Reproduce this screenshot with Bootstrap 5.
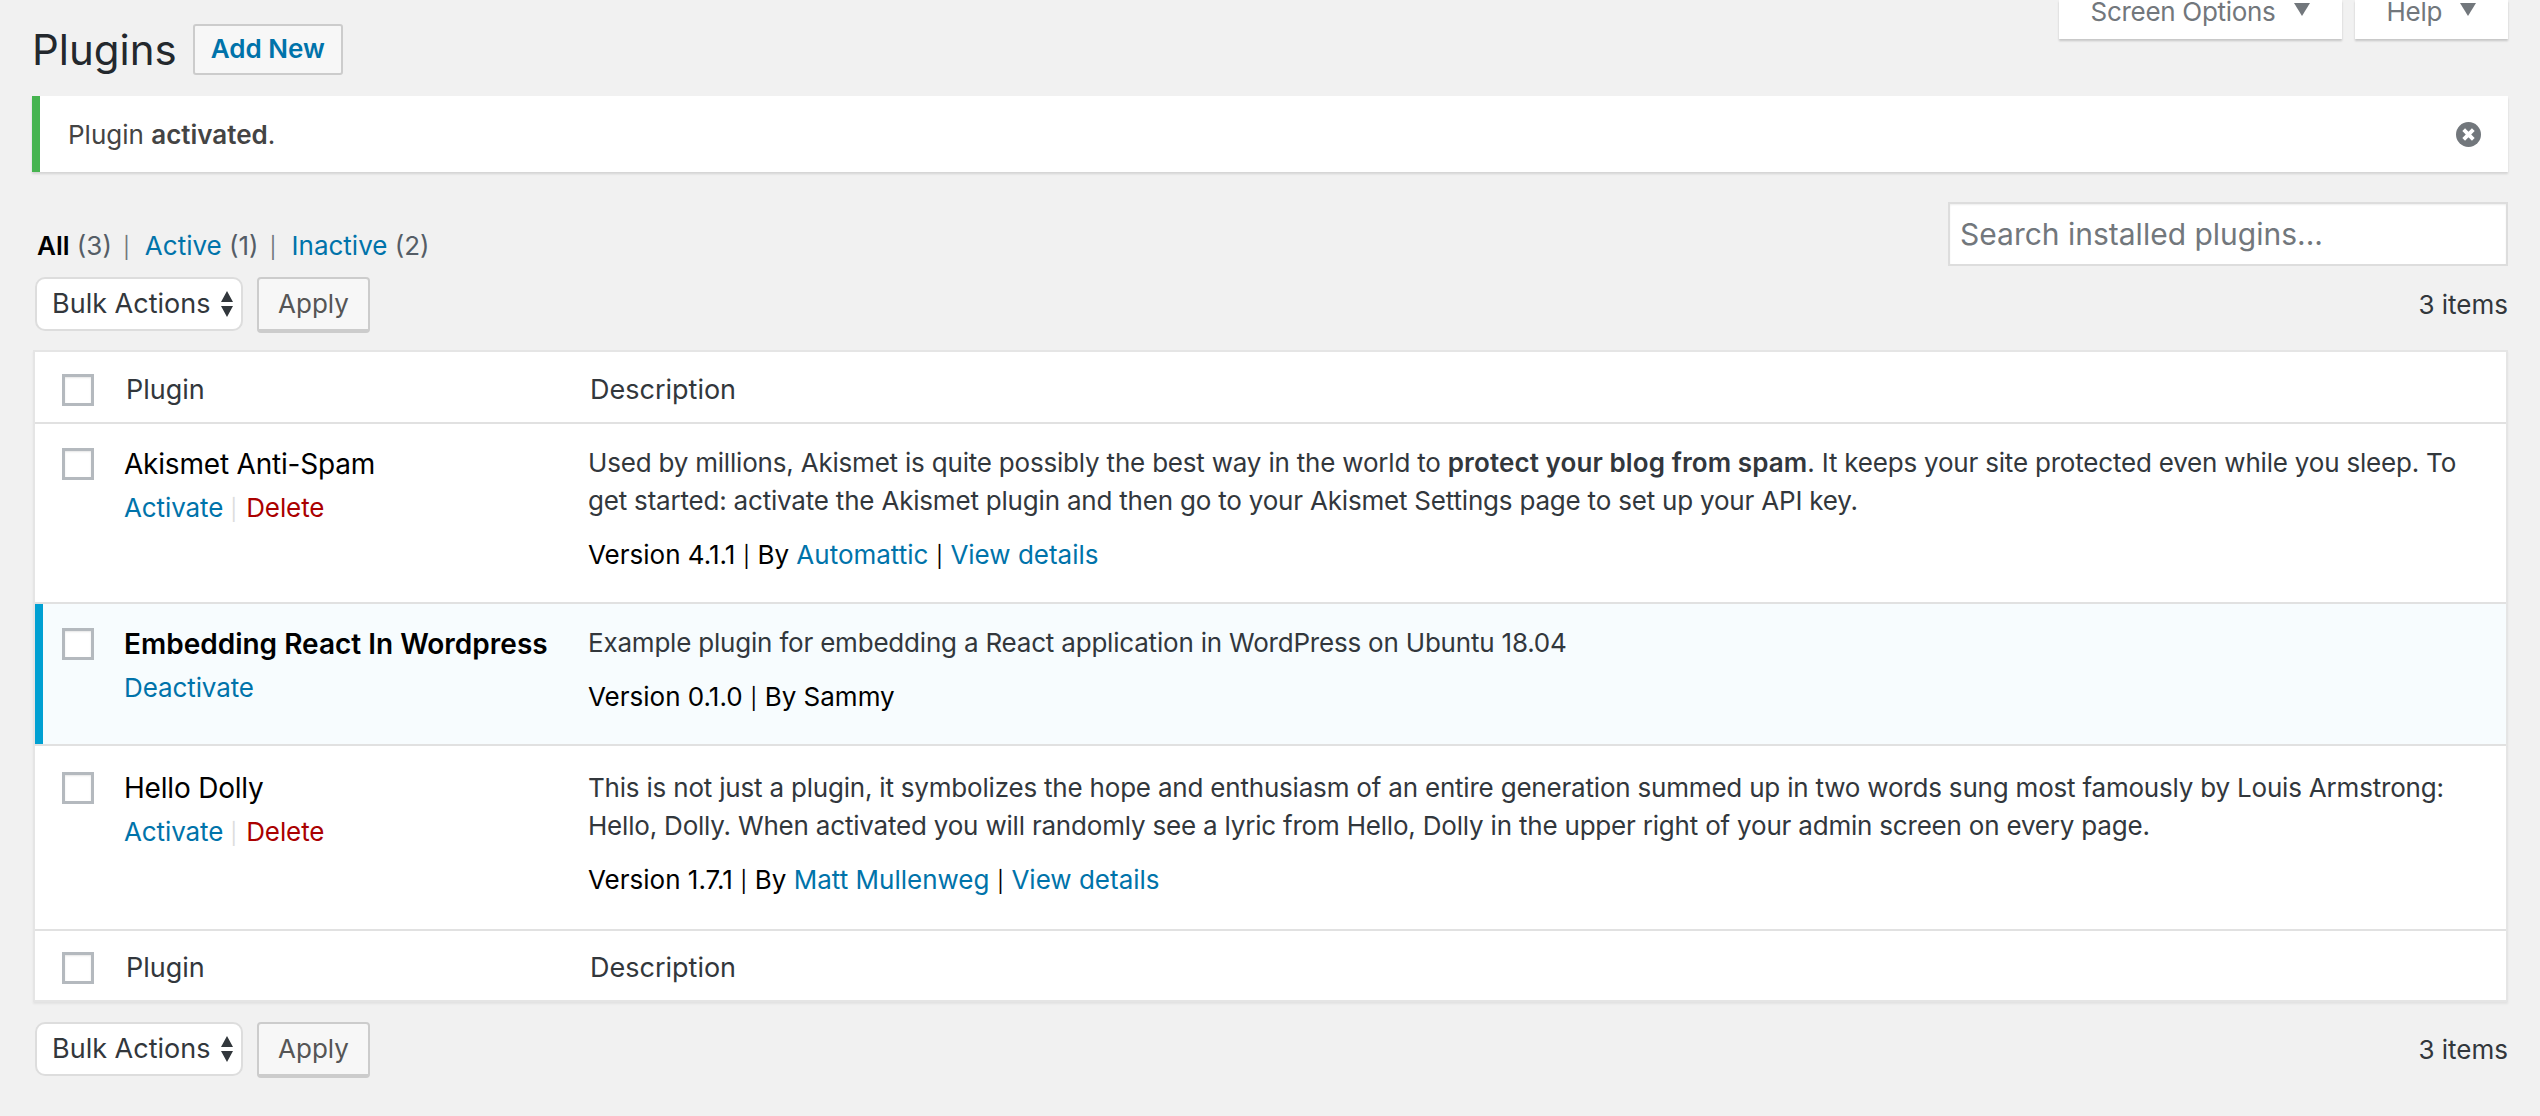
<!DOCTYPE html>
<html lang="en">
<head>
  <meta charset="UTF-8">
  <meta name="viewport" content="width=device-width, initial-scale=1">
  <title>Plugins</title>
  <link href="https://cdn.jsdelivr.net/npm/bootstrap@5.3.3/dist/css/bootstrap.min.css" rel="stylesheet">
  <style>
    body {
      background: #f1f1f1;
      color: #444;
      font-family: Inter, Roboto, "Liberation Sans", sans-serif;
      font-size: 26px;
      line-height: 38px;
      height: 1116px;
      overflow: hidden;
    }
    a { text-decoration: none; color: #0073aa; }

    .wp-wrap { padding: 0 32px; position: relative; }
    .meta-tabs { position: absolute; top: 0; right: 32px; gap: 13px; }
    .meta-tab {
      height: 39px;
      background: #fff;
      box-shadow: 0 2px 2px rgba(0,0,0,.18);
      color: #72777c;
      padding: 0 32px;
      line-height: 24px;
      letter-spacing: -.3px;
      gap: 18px;
    }
    .meta-tab svg { width: 16px; height: 13px; margin-top: 3px; }

    .head-row { height: 96px; padding-top: 24px; align-items: flex-start; }
    .page-title { font-size: 42px; line-height: 52px; color: #23282d; font-weight: 400; margin: 0 16px 0 0; }
    .add-btn {
      width: 150px; height: 51px;
      border: 2px solid #ccc;
      border-radius: 3px;
      background: #f7f7f7;
      color: #0073aa;
      font-weight: 600;
      font-size: 26px;
      line-height: 46px;
      text-align: center;
    }

    .notice-ok {
      height: 76px;
      background: #fff;
      border-left: 8px solid #46b450;
      box-shadow: 0 2px 2px rgba(0,0,0,.12);
      padding: 2px 27px 0 28px;
    }
    .notice-ok strong { font-weight: 600; }
    .dismiss-ic { width: 25px; height: 25px; margin-top: -2px; }

    .filters-row { height: 105px; }
    .view-links { padding: 55px 0 0 5px; color: #555d66; line-height: 38px; }
    .view-links b { color: #000; font-weight: 600; }
    .view-links i { font-style: normal; font-size: 21px; color: #72777c; margin: 0 15px 0 11px; }
    .search-box {
      width: 560px; height: 64px; margin-top: 30px;
      border: 2px solid #ddd;
      box-shadow: inset 0 1px 2px rgba(0,0,0,.07);
      background: #fff;
      font-size: 30px;
      padding: 0 10px;
      border-radius: 0;
      color: #32373c;
    }
    .search-box::placeholder { color: #72777c; opacity: 1; }

    .tablenav-row { height: 73px; align-items: flex-start; }
    .foot-nav { margin-top: 20px; }
    .bulk-sel {
      width: 208px; height: 54px;
      margin-left: 3px;
      background: #fff;
      border: 2px solid #ddd;
      border-radius: 10px;
      color: #32373c;
      font-size: 27px;
      line-height: 50px;
      padding-left: 15px;
      gap: 11px;
    }
    .bulk-sel svg { width: 12px; height: 26px; }
    .apply-btn {
      width: 113px; height: 56px;
      margin-left: 14px;
      background: #f7f7f7;
      border: 2px solid #ccc;
      border-bottom-width: 4px;
      border-radius: 4px;
      color: #555;
      line-height: 50px;
      text-align: center;
    }
    .count-txt { color: #32373c; line-height: 56px; margin-left: auto; }

    .plugin-tbl {
      background: #fff;
      border: 2px solid #e5e5e5;
      box-shadow: 0 2px 2px rgba(0,0,0,.06);
      margin-left: 1px;
    }
    .tbl-head { height: 72px; padding-top: 5px; border-bottom: 2px solid #e1e1e1; color: #32373c; font-size: 27px; align-items: center; }
    .tbl-head.tbl-foot { height: 71px; border-bottom: 0; border-top: 2px solid #e1e1e1; }
    .cell-check { width: 89px; flex: none; padding-left: 27px; }
    .tick-box { display: block; width: 32px; height: 32px; border: 3px solid #b4b9be; background: #fff; box-shadow: inset 0 1px 2px rgba(0,0,0,.1); }
    .cell-name { width: 464px; flex: none; }
    .tbl-head .cell-name { padding-left: 2px; }
    .tbl-head .cell-desc { padding-left: 2px; }
    .cell-desc { flex: 1; }

    .plug-row { border-bottom: 2px solid #e1e1e1; }
    .plug-row.last-row { border-bottom: 0; }
    .plug-row .cell-check { padding-top: 24px; }
    .plug-row .cell-name, .plug-row .cell-desc { padding-top: 20px; }
    .plug-row.last-row .cell-check { padding-top: 26px; }
    .plug-row.last-row .cell-name { padding-top: 22px; }
    .plug-row.last-row .cell-desc { padding-top: 23px; }
    .plug-name { color: #000; font-size: 28px; line-height: 40px; letter-spacing: -.2px; }
    .plug-acts { color: #ddd; margin-top: 5px; letter-spacing: -.1px; }
    .plug-acts .sep { font-size: 21px; margin: 0 9px 0 7px; }
    .act-del { color: #a00; }
    .plug-desc { margin: 0; color: #32373c; letter-spacing: -.2px; }
    .plug-desc strong { font-weight: 600; letter-spacing: .1px; }
    .plug-ver { color: #000; margin-top: 16px; }
    .plug-ver i { font-style: normal; font-size: 21px; margin: 0 7.5px; }

    .h-178 { height: 180px; }
    .h-140 { height: 142px; }
    .h-183 { height: 183px; }
    .row-active { background: #f7fcfe; box-shadow: inset 8px 0 0 #00a0d2; }
    .row-active .plug-name { font-weight: 600; letter-spacing: 0; }
  </style>
</head>
<body>
  <div class="wp-wrap">
    <div class="meta-tabs d-flex">
      <div class="meta-tab d-flex align-items-start">Screen Options <svg viewBox="0 0 16 13"><path d="M0 0h16L8 13z" fill="#72777c"/></svg></div>
      <div class="meta-tab d-flex align-items-start">Help <svg viewBox="0 0 16 13"><path d="M0 0h16L8 13z" fill="#72777c"/></svg></div>
    </div>

    <div class="head-row d-flex">
      <h1 class="page-title">Plugins</h1>
      <a class="add-btn" href="#">Add New</a>
    </div>

    <div class="notice-ok d-flex align-items-center justify-content-between">
      <span>Plugin <strong>activated</strong>.</span>
      <svg class="dismiss-ic" viewBox="0 0 26 26"><circle cx="13" cy="13" r="13" fill="#72777c"/><path d="M8 8l10 10M18 8L8 18" stroke="#fff" stroke-width="4"/></svg>
    </div>

    <div class="filters-row d-flex justify-content-between">
      <div class="view-links"><b>All</b> (3)<i>|</i><a href="#">Active</a> (1)<i>|</i><a href="#">Inactive</a> (2)</div>
      <input class="search-box" type="text" placeholder="Search installed plugins...">
    </div>

    <div class="tablenav-row d-flex">
      <div class="bulk-sel d-flex align-items-center">Bulk Actions <svg viewBox="0 0 12 26"><path d="M6 0l6 11H0zM6 26l6-11H0z" fill="#32373c"/></svg></div>
      <div class="apply-btn">Apply</div>
      <div class="count-txt">3 items</div>
    </div>

    <div class="plugin-tbl">
      <div class="tbl-head d-flex">
        <div class="cell-check"><span class="tick-box"></span></div>
        <div class="cell-name">Plugin</div>
        <div class="cell-desc">Description</div>
      </div>

      <div class="plug-row h-178 d-flex">
        <div class="cell-check"><span class="tick-box"></span></div>
        <div class="cell-name">
          <div class="plug-name">Akismet Anti-Spam</div>
          <div class="plug-acts"><a href="#">Activate</a><span class="sep">|</span><a class="act-del" href="#">Delete</a></div>
        </div>
        <div class="cell-desc">
          <p class="plug-desc">Used by millions, Akismet is quite possibly the best way in the world to <strong>protect your blog from spam</strong>. It keeps your site protected even while you sleep. To<br>get started: activate the Akismet plugin and then go to your Akismet Settings page to set up your API key.</p>
          <div class="plug-ver">Version 4.1.1<i>|</i>By <a href="#">Automattic</a><i>|</i><a href="#">View details</a></div>
        </div>
      </div>

      <div class="plug-row h-140 row-active d-flex">
        <div class="cell-check"><span class="tick-box"></span></div>
        <div class="cell-name">
          <div class="plug-name">Embedding React In Wordpress</div>
          <div class="plug-acts"><a href="#">Deactivate</a></div>
        </div>
        <div class="cell-desc">
          <p class="plug-desc">Example plugin for embedding a React application in WordPress on Ubuntu 18.04</p>
          <div class="plug-ver">Version 0.1.0<i>|</i>By Sammy</div>
        </div>
      </div>

      <div class="plug-row last-row h-183 d-flex">
        <div class="cell-check"><span class="tick-box"></span></div>
        <div class="cell-name">
          <div class="plug-name">Hello Dolly</div>
          <div class="plug-acts"><a href="#">Activate</a><span class="sep">|</span><a class="act-del" href="#">Delete</a></div>
        </div>
        <div class="cell-desc">
          <p class="plug-desc">This is not just a plugin, it symbolizes the hope and enthusiasm of an entire generation summed up in two words sung most famously by Louis Armstrong:<br>Hello, Dolly. When activated you will randomly see a lyric from Hello, Dolly in the upper right of your admin screen on every page.</p>
          <div class="plug-ver">Version 1.7.1<i>|</i>By <a href="#">Matt Mullenweg</a><i>|</i><a href="#">View details</a></div>
        </div>
      </div>

      <div class="tbl-head tbl-foot d-flex">
        <div class="cell-check"><span class="tick-box"></span></div>
        <div class="cell-name">Plugin</div>
        <div class="cell-desc">Description</div>
      </div>
    </div>

    <div class="tablenav-row foot-nav d-flex">
      <div class="bulk-sel d-flex align-items-center">Bulk Actions <svg viewBox="0 0 12 26"><path d="M6 0l6 11H0zM6 26l6-11H0z" fill="#32373c"/></svg></div>
      <div class="apply-btn">Apply</div>
      <div class="count-txt">3 items</div>
    </div>
  </div>
  <script src="https://cdn.jsdelivr.net/npm/bootstrap@5.3.3/dist/js/bootstrap.bundle.min.js"></script>
</body>
</html>
